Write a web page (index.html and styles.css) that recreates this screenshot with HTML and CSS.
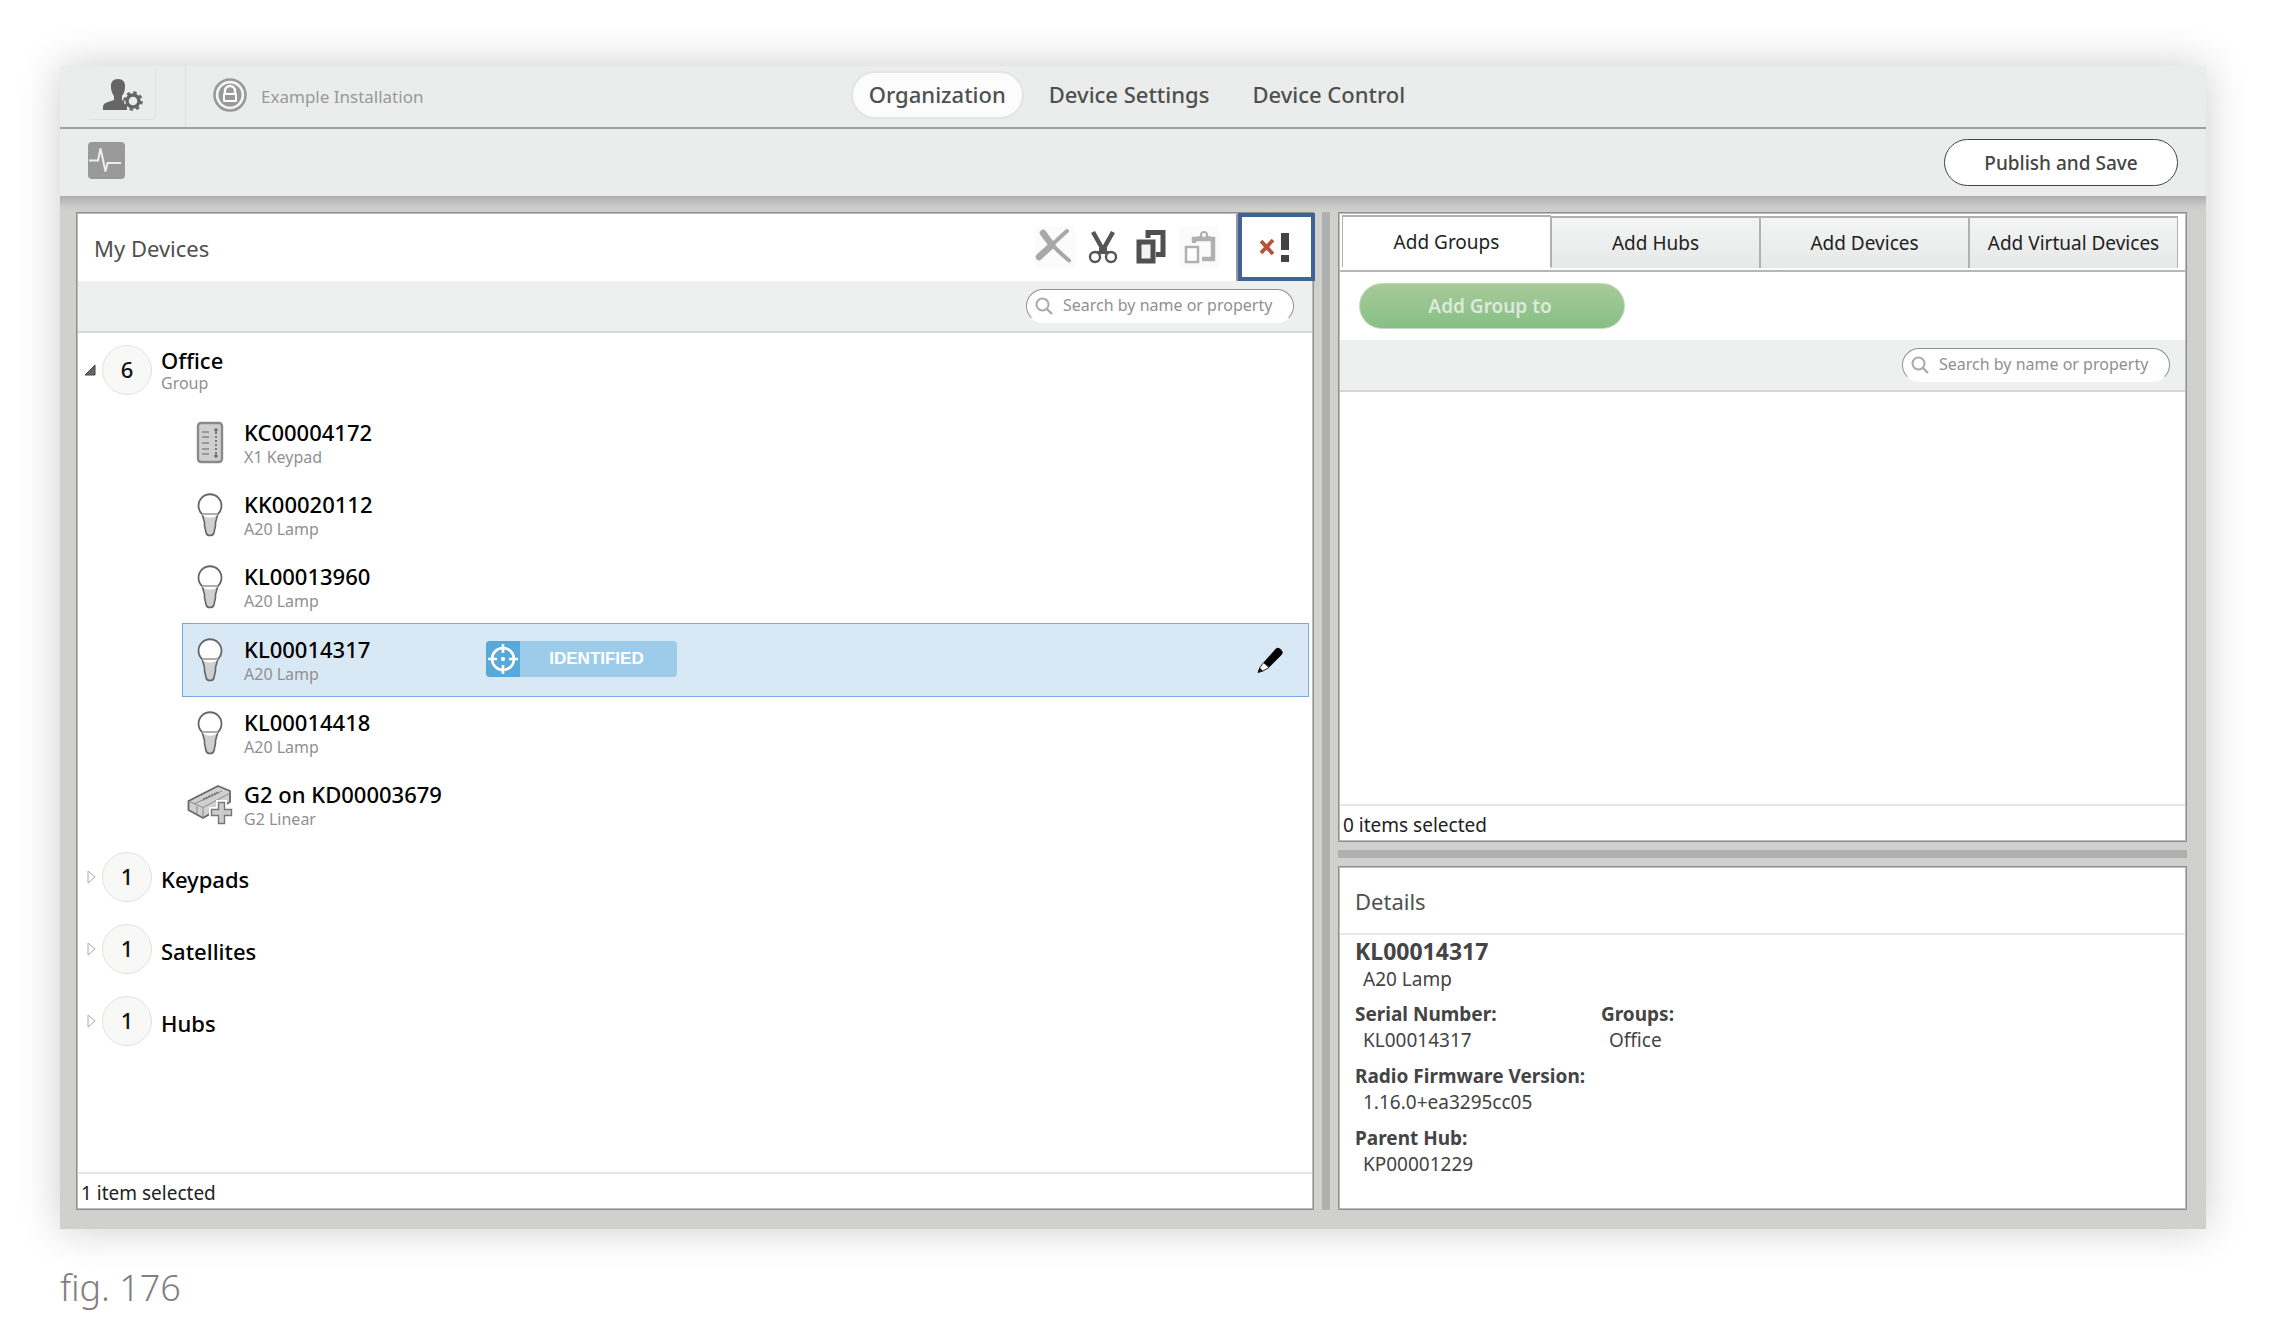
FILE: index.html
```html
<!DOCTYPE html>
<html lang="en">
<head>
<meta charset="utf-8">
<title>Organization – Example Installation</title>
<link rel="stylesheet" href="styles.css">
</head>
<body>
<svg class="defs" aria-hidden="true">
  <symbol id="lamp" viewBox="0 0 26 44">
    <path d="M5 20.500h16l-2.500 9v3L17 39.500q-.5 3-4 3t-4-3L7.500 32.500v-3z" fill="#d0d0d0" stroke="#666" stroke-width="1.600" stroke-linejoin="round"/>
    <circle cx="13" cy="13" r="11.500" fill="#fff"/>
    <path d="M5 21A11.500 11.500 0 1 1 21 21" fill="none" stroke="#666" stroke-width="1.800"/>
    <path d="M5 21h16" stroke="#777" stroke-width="1.200"/>
  </symbol>
  <symbol id="glass" viewBox="0 0 18 18">
    <circle cx="7.500" cy="7.500" r="6" fill="none" stroke="#aaa" stroke-width="2"/>
    <path d="M12 12l5 5" stroke="#aaa" stroke-width="2.400"/>
  </symbol>
</svg>
<main class="page">
  <section class="app">
    <header class="topbar">
      <div class="identity">
        <div class="account">
          <button class="account-button" aria-label="Account settings">
            <svg width="42" height="34" viewBox="0 0 42 34">
              <path d="M16 1c5 0 7 3 7 7 0 5-1 7-3 10v4l5 2v8H1c-.5-5 1-7 5-8l6-2v-4c-2-3-3-5-3-10 0-4 2-7 7-7z" fill="#666"/>
              <circle cx="31" cy="23" r="9" fill="#ebedec"/>
              <circle cx="31" cy="23" r="6" fill="none" stroke="#666" stroke-width="3.400"/>
              <circle cx="31" cy="23" r="8.500" fill="none" stroke="#666" stroke-width="2.500" stroke-dasharray="3.340 3.340"/>
            </svg>
          </button>
        </div>
        <div class="installation">
          <svg width="34" height="34" viewBox="0 0 34 34">
            <circle cx="17" cy="17" r="15.500" fill="#f4f4f4" stroke="#999" stroke-width="2.600"/>
            <circle cx="17" cy="17" r="11.500" fill="#999"/>
            <path d="M12 16v-3a5 5 0 0 1 10 0v3" fill="none" stroke="#fff" stroke-width="2.400"/>
            <rect x="10" y="15" width="14" height="9" rx="1" fill="#fff"/>
            <rect x="12" y="17" width="10" height="5" fill="#999"/>
          </svg>
          <span>Example Installation</span>
        </div>
      </div>
      <nav class="views">
        <a href="#organization" class="view view-active">Organization</a>
        <a href="#settings" class="view">Device Settings</a>
        <a href="#control" class="view">Device Control</a>
      </nav>
    </header>
    <div class="toolbar">
      <button class="pulse" aria-label="Activity">
        <svg width="37" height="37" viewBox="0 0 37 37">
          <rect width="37" height="37" rx="4" fill="#999"/>
          <path d="M1 18.500h9l2.500-12 5 23 2-8.500h13.500" fill="none" stroke="#eee" stroke-width="2"/>
        </svg>
      </button>
      <button class="publish">Publish and Save</button>
    </div>
    <div class="workspace">
      <section class="panel devices">
        <div class="devices-head">
          <h2>My Devices</h2>
          <div class="actions">
            <button class="tool tool-off" aria-label="Delete" disabled>
              <svg width="40" height="41" viewBox="0 0 40 41"><path d="M8 5.500c5 9 14 18 26 28M32 4C23 12 13 21 4 31" fill="none" stroke="#a8a8a8" stroke-width="4" stroke-linecap="round"/><path d="M8 6l9 12M16 19L4 30" stroke="#a8a8a8" stroke-width="6.500" stroke-linecap="round"/></svg>
            </button>
            <button class="tool" aria-label="Cut">
              <svg width="40" height="41" viewBox="0 0 40 41"><path d="M10 5l9 16v6M30 5l-9 16v6" fill="none" stroke="#555" stroke-width="4.500"/><path d="M16 21h8v5h-8z" fill="#555"/><circle cx="12" cy="30" r="5" fill="#fff" stroke="#555" stroke-width="2.400"/><circle cx="28" cy="30" r="5" fill="#fff" stroke="#555" stroke-width="2.400"/><path d="M12 25h16" stroke="#555" stroke-width="2"/></svg>
            </button>
            <button class="tool" aria-label="Copy">
              <svg width="40" height="41" viewBox="0 0 40 41"><path d="M17 11V5.500h15v22h-7" fill="none" stroke="#505050" stroke-width="5"/><rect x="8" y="15" width="14" height="19" fill="#f2f2f2" stroke="#505050" stroke-width="5"/></svg>
            </button>
            <button class="tool tool-off" aria-label="Paste" disabled>
              <svg width="40" height="41" viewBox="0 0 40 41"><path d="M15 16v-4h19v20H23" fill="none" stroke="#b0b0b0" stroke-width="4.500"/><path d="M16 13q1-4 5-4a4.500 4.500 0 0 1 8 0q4 0 5 4z" fill="#b0b0b0"/><circle cx="25" cy="8" r="3" fill="#fff" stroke="#b0b0b0" stroke-width="2"/><rect x="7" y="20" width="12" height="15" fill="#fff" stroke="#b0b0b0" stroke-width="2.500"/></svg>
            </button>
          </div>
          <button class="errors" aria-label="Show device errors">
            <svg width="34" height="34" viewBox="0 0 34 34"><path d="M1 11l12 13M13 10L1 23" fill="none" stroke="#b5533c" stroke-width="3.800"/><path d="M21 3h8v17h-8zM21 25h8v7h-8z" fill="#444"/></svg>
          </button>
        </div>
        <div class="searchbar">
          <label class="search"><svg width="18" height="18"><use href="#glass"/></svg><input type="text" aria-label="Search my devices" placeholder="Search by name or property"></label>
        </div>
        <ul class="tree">
          <li>
            <div class="group group-open">
              <button class="toggle" aria-label="Collapse Office"><svg width="12" height="12" viewBox="0 0 12 12"><path d="M11 1v10H1z" fill="#666" stroke="#444"/></svg></button>
              <span class="count">6</span>
              <div class="label"><strong>Office</strong><small>Group</small></div>
            </div>
            <ul class="items">
              <li class="item">
                <svg class="icon" width="46" height="44" viewBox="0 0 46 44"><rect x="11" y="2" width="24" height="39" rx="3" fill="#cfcfcf" stroke="#8a8a8a" stroke-width="2.400"/><path d="M15 11h7M15 16h7M15 22h7M15 28h7M15 33h7" stroke="#888" stroke-width="1.600"/><path d="M29 11v23" stroke="#777" stroke-width="2" stroke-dasharray="2 2"/><circle cx="29" cy="9" r="1.700" fill="#666"/><circle cx="29" cy="35" r="1.700" fill="#666"/></svg>
                <div class="label"><strong>KC00004172</strong><small>X1 Keypad</small></div>
              </li>
              <li class="item"><svg class="icon" width="46" height="44"><use href="#lamp"/></svg><div class="label"><strong>KK00020112</strong><small>A20 Lamp</small></div></li>
              <li class="item"><svg class="icon" width="46" height="44"><use href="#lamp"/></svg><div class="label"><strong>KL00013960</strong><small>A20 Lamp</small></div></li>
              <li class="item item-selected">
                <svg class="icon" width="46" height="44"><use href="#lamp"/></svg>
                <div class="label"><strong>KL00014317</strong><small>A20 Lamp</small></div>
                <button class="badge">
                  <svg width="34" height="36" viewBox="0 0 34 36"><path d="M0 0h34v36H0z" fill="#58a8da"/><circle cx="17" cy="18" r="11" fill="none" stroke="#fff" stroke-width="2.600"/><path d="M17 3v9M17 24v9M2 18h9M23 18h9M15 18h4M17 16v4" stroke="#fff" stroke-width="2.600"/></svg>
                  <span>IDENTIFIED</span>
                </button>
                <button class="edit" aria-label="Edit KL00014317">
                  <svg width="28" height="28" viewBox="0 0 28 28"><path d="M7.500 16.500L19.500 3q2.500-2.500 5.500.5t.5 5.500L13 21.500z" fill="#000"/><path d="M7.500 16.500l5.500 5-6 3.500-5 1.500 2-5z" fill="#fff" stroke="#222"/><path d="M2 26.500l1.500-5 3.500 3.500z" fill="#111"/></svg>
                </button>
              </li>
              <li class="item"><svg class="icon" width="46" height="44"><use href="#lamp"/></svg><div class="label"><strong>KL00014418</strong><small>A20 Lamp</small></div></li>
              <li class="item">
                <svg class="icon" width="46" height="44" viewBox="0 0 46 44"><path d="M1.500 18L31 3l12 5v11L16 35 1.500 27z" fill="#d0d0d0" stroke="#666" stroke-width="1.800" stroke-linejoin="round"/><path d="M1.500 18L16 24.500 43 10M16 24.500V35M7 21l28-13M10 23v8" fill="none" stroke="#8a8a8a" stroke-width="1"/><path d="M16 16.500L31 9.500" stroke="#777" stroke-width="2.200" stroke-dasharray="2 1"/><path d="M31 19h7v7h7v7h-7v8h-7v-8h-7v-7h7z" fill="#fff" stroke="#fff" stroke-width="4"/><path d="M31.500 19.500h6v7h7v6h-7v8h-6v-8h-7v-6h7z" fill="#ccc" stroke="#777" stroke-width="1.400"/></svg>
                <div class="label"><strong>G2 on KD00003679</strong><small>G2 Linear</small></div>
              </li>
            </ul>
          </li>
          <li class="group"><button class="toggle" aria-label="Expand Keypads"><svg width="9" height="14" viewBox="0 0 9 14"><path d="M1 1v12l7-6z" fill="#fff" stroke="#aaa"/></svg></button><span class="count">1</span><div class="label"><strong>Keypads</strong></div></li>
          <li class="group"><button class="toggle" aria-label="Expand Satellites"><svg width="9" height="14" viewBox="0 0 9 14"><path d="M1 1v12l7-6z" fill="#fff" stroke="#aaa"/></svg></button><span class="count">1</span><div class="label"><strong>Satellites</strong></div></li>
          <li class="group"><button class="toggle" aria-label="Expand Hubs"><svg width="9" height="14" viewBox="0 0 9 14"><path d="M1 1v12l7-6z" fill="#fff" stroke="#aaa"/></svg></button><span class="count">1</span><div class="label"><strong>Hubs</strong></div></li>
        </ul>
        <p class="status">1 item selected</p>
      </section>
      <div class="splitter"></div>
      <div class="side">
        <section class="panel add">
          <div class="tabs" role="tablist">
            <button role="tab" class="tab tab-active" aria-selected="true">Add Groups</button>
            <button role="tab" class="tab">Add Hubs</button>
            <button role="tab" class="tab">Add Devices</button>
            <button role="tab" class="tab">Add Virtual Devices</button>
          </div>
          <div class="add-action"><button class="add-button">Add Group to</button></div>
          <div class="searchbar searchbar-side">
            <label class="search"><svg width="18" height="18"><use href="#glass"/></svg><input type="text" aria-label="Search groups" placeholder="Search by name or property"></label>
          </div>
          <div class="empty"></div>
          <p class="status">0 items selected</p>
        </section>
        <div class="splitter"></div>
        <section class="panel details">
          <h2>Details</h2>
          <div class="details-body">
            <h3>KL00014317</h3>
            <p>A20 Lamp</p>
            <div class="facts">
              <dl>
                <dt>Serial Number:</dt><dd>KL00014317</dd>
                <dt>Radio Firmware Version:</dt><dd>1.16.0+ea3295cc05</dd>
                <dt>Parent Hub:</dt><dd>KP00001229</dd>
              </dl>
              <dl><dt>Groups:</dt><dd>Office</dd></dl>
            </div>
          </div>
        </section>
      </div>
    </div>
  </section>
  <p class="caption">fig. 176</p>
</main>
</body>
</html>
```
FILE: styles.css
```css
* { box-sizing: border-box; }
body, h2, h3, p, ul, dl, dd { margin: 0; padding: 0; }
ul { list-style: none; }
body { font-family: "Noto Sans", "Open Sans", sans-serif; color: #444; background: #fff; }
button { font: inherit; color: inherit; background: none; border: 0; padding: 0; }
svg { display: block; flex: none; }
.defs { position: absolute; width: 0; height: 0; }

.page { display: flex; flex-direction: column; min-height: 100vh; padding: 66px 66px 0 60px; }
.app { flex: 1; display: flex; flex-direction: column; background: #d0d0ce; box-shadow: 0 0 40px rgba(0, 0, 0, .2); }

.topbar { display: grid; grid-template-columns: 1fr auto 1fr; height: 63px; background: #ebedec; border-bottom: 2px solid #a0a2a1; }
.identity { display: flex; }
.account { width: 126px; padding: 4px 29px 7px; border-right: 1px solid #dfe1e0; }
.account-button { display: flex; align-items: center; width: 67px; height: 50px; padding-left: 13px; border: 1px solid #e0e2e1; border-width: 0 1px 1px 0; border-radius: 0 0 4px 0; }
.installation { display: flex; align-items: center; gap: 14px; padding: 0 0 4px 27px; color: #999; font-size: 17px; }
.installation span { padding-top: 4px; }
.views { display: flex; align-items: center; gap: 7px; padding: 0 0 4px 8px; }
.view { padding: 5px 16px 7px; border: 2px solid transparent; border-radius: 24px; color: #505050; font-size: 22px; font-weight: 500; line-height: 32px; text-decoration: none; }
.view-active { background: #fcfcfc; border-color: #e3e5e4; }

.toolbar { display: flex; align-items: center; justify-content: space-between; height: 67px; padding: 0 28px; background: #ebedec; }
.pulse { padding-bottom: 4px; }
.publish { width: 234px; height: 47px; border: 1px solid #444; border-radius: 24px; background: #fff; font-size: 19px; font-weight: 500; }

.workspace { flex: 1; display: grid; grid-template-columns: 1238fr 8px 849fr; gap: 8px; padding: 16px 19px 19px 16px; background: linear-gradient(#adadad, #cbcbcb 10px, #d0d0ce 16px) no-repeat top / 100% 16px; }
.panel { display: flex; flex-direction: column; background: #fff; border: 1px solid #8f8f8f; outline: 1px solid #bcbcbc; outline-offset: -2px; }
.splitter { background: #b0b0b0; }
.side { display: grid; grid-template-rows: 1fr 8px auto; gap: 8px; }

h2 { font-size: 22px; font-weight: 400; color: #505050; }
.devices-head { display: flex; align-items: center; height: 68px; padding-left: 17px; }
.devices-head h2 { flex: 1; padding-top: 2px; }
.actions { display: flex; align-items: center; align-self: stretch; gap: 8px; padding-right: 17px; border-right: 2px solid #999; }
.tool-off { background: #fbfbfb; }
.errors { display: flex; align-items: center; justify-content: center; width: 77px; height: 68px; margin-right: -2px; border: 4px solid #3f6396; background: #fff; z-index: 1; }

.searchbar { display: flex; align-items: center; justify-content: flex-end; height: 52px; padding-right: 19px; background: #eef0ef; border-bottom: 2px solid #d5d7d6; }
.searchbar-side { padding-right: 16px; }
.search { display: flex; align-items: center; gap: 10px; width: 268px; height: 34px; padding: 0 8px; background: #fff; border: 1px solid #909090; border-bottom-color: transparent; border-radius: 17px; }
.search input { flex: 1; min-width: 0; height: 26px; padding: 0 0 2px; border: 0; outline: 0; background: none; font: inherit; font-size: 16px; }
.search input::placeholder { color: #909090; opacity: 1; }

.tree { flex: 1; }
.group { display: flex; align-items: center; height: 72px; }
.group-open { height: 74px; }
.toggle { display: flex; justify-content: flex-end; width: 19px; margin-right: 6px; }
.count { width: 50px; height: 50px; margin-right: 9px; border: 1px solid #e2e2e2; border-radius: 50%; background: #f8f8f7; color: #111; font-size: 22px; font-weight: 500; line-height: 47px; text-align: center; }
.label { display: flex; flex-direction: column; padding-top: 3px; }
.label strong { color: #000; font-size: 22px; font-weight: 500; line-height: 26px; }
.label small { color: #909090; font-size: 16px; line-height: 24px; }
.group-open .label { padding-top: 0; }
.group-open small { line-height: 20px; }
.items { padding: 0 4px 0 105px; }
.item { display: flex; align-items: center; height: 72px; padding: 0 24px 0 4px; border: 1px solid transparent; }
.item-selected { height: 74px; background: #d9e8f5; border-color: #79a9de; }
.icon { margin-right: 11px; }
.item .label { width: 242px; padding-top: 2px; }
.item small { line-height: 25px; }
.badge { display: flex; align-items: center; width: 191px; height: 36px; margin-top: -2px; border-radius: 4px; overflow: hidden; background: #9dcceb; color: #fff; font: bold 17px/36px "Liberation Sans", Arial, sans-serif; }
.badge span { flex: 1; padding-right: 4px; }
.edit { margin-left: auto; }
.status { height: 37px; padding: 1px 0 0 4px; border-top: 2px solid #e6e6e6; color: #222; font-size: 19px; line-height: 36px; }

.tabs { display: grid; grid-template-columns: repeat(4, 1fr); align-items: end; height: 59px; padding: 2px 8px 2px 3px; border-bottom: 2px solid #b5b7b6; }
.tab { height: 52px; border: 2px solid #b0b2b1; border-width: 2px 1px 0; background: linear-gradient(#f3f4f4, #e7e8e8); color: #222; font-size: 19px; }
.tab-active { align-self: start; background: #fff; }
.add-action { padding: 11px 20px; }
.add-button { display: block; width: 266px; height: 46px; padding-right: 4px; border: 1px solid #c5d8c0; border-radius: 23px; background: linear-gradient(#a8ca98, #86c086); color: #dfe8dc; font-size: 19px; font-weight: 600; }
.empty { flex: 1; }

.details h2 { height: 68px; padding: 0 16px; border-bottom: 2px solid #e8e8e8; line-height: 68px; }
.details-body { padding: 1px 16px 31px; font-size: 19px; line-height: 26px; }
.details h3 { font-size: 23px; line-height: 30px; }
.details p, .details dd { padding-left: 8px; }
.details dd { line-height: 27px; }
.facts { display: grid; grid-template-columns: 246px 1fr; }
.facts dt { padding-top: 9px; font-size: 19px; font-weight: 700; white-space: nowrap; }

.caption { height: 113px; color: #808080; font-size: 36px; font-weight: 300; line-height: 117px; }
```
